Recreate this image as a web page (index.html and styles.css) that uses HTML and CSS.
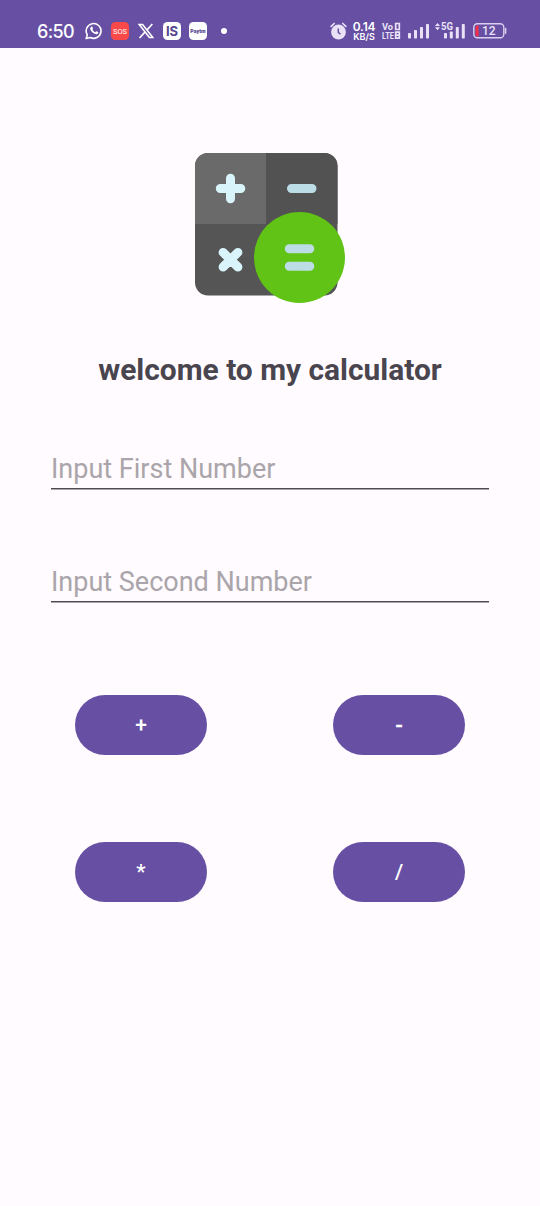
FILE: index.html
```html
<!DOCTYPE html>
<html lang="en">
<head>
<meta charset="utf-8">
<meta name="viewport" content="width=device-width">
<title>Calculator</title>
<link rel="stylesheet" href="styles.css">
</head>
<body>
<header class="status">
  <div class="status-left">
    <span class="clock">6:50</span>
    <svg class="whatsapp" width="18" height="18" viewBox="0 0 18 18" fill="none">
      <path d="M1.200 16.600 2.300 12.800A7.400 7.400 0 1 1 5.200 15.500Z" stroke="#fff" stroke-width="1.600" stroke-linejoin="round"/>
      <path d="M6.200 4.700c.5-.4 1-.2 1.200.2l.6 1.400c.2.500-.6 1-.6 1.300.5 1.100 1.500 2.100 2.800 2.600.4.100.9-1.100 1.300-.9l1.600.8c.6.400-.1 1.600-.7 2-2 1.100-6.100-1.900-7-4.500-.4-1.100 0-2.200.8-2.900Z" fill="#fff"/>
    </svg>
    <span class="app sos">SOS</span>
    <svg class="x-logo" width="16" height="16" viewBox="0 0 16 16" fill="none" stroke="#fff">
      <path d="M1.200 1.500h3.400L14.800 14.500h-3.400Z" stroke-width="1.600"/>
      <path d="M14.300 1 9 7M7 9 1.500 15" stroke-width="1.700"/>
    </svg>
    <span class="app is">IS</span>
    <span class="app paytm">Paytm</span>
    <span class="dot"></span>
  </div>
  <div class="status-right">
    <svg class="alarm" width="17" height="18" viewBox="0 0 17 18" fill="none">
      <circle cx="8.500" cy="10" r="7.400" fill="#e9e1f6"/>
      <path d="M1.200 4.300 4.200 1.500M15.800 4.300 12.800 1.500" stroke="#e9e1f6" stroke-width="1.700" stroke-linecap="round"/>
      <path d="M8.300 6.500v4l2.200 1.700" stroke="#6750a4" stroke-width="1.500"/>
    </svg>
    <span class="speed"><b>0.14</b><small>KB/S</small></span>
    <svg class="volte" width="19" height="18" viewBox="0 0 19 18">
      <text x="0" y="8" textLength="11" lengthAdjust="spacingAndGlyphs">Vo</text>
      <text x="0" y="16.500" textLength="12" lengthAdjust="spacingAndGlyphs">LTE</text>
      <path d="M13.700 1.500h3.600v6h-3.600ZM13.700 10.200h3.600v6h-3.600ZM13.700 13.200h3.600" fill="none" stroke="#e9e1f6" stroke-width="1.700"/>
    </svg>
    <svg class="signal" width="22" height="16" viewBox="0 0 22 16" fill="#e9e1f6">
      <rect x="0" y="10" width="3" height="5.500" rx=".8"/><rect x="6" y="7" width="3" height="8.500" rx=".8"/><rect x="12" y="4" width="3" height="11.500" rx=".8"/><rect x="18" y="1" width="3" height="14.500" rx=".8"/>
    </svg>
    <svg class="signal5g" width="31" height="18" viewBox="0 0 31 18" fill="#e9e1f6">
      <path d="m0 4 2.500-3 2.500 3ZM0 5.300h5l-2.500 3Z"/>
      <text x="6" y="8" textLength="12" lengthAdjust="spacingAndGlyphs">5G</text>
      <rect x="9" y="11" width="3" height="5.500" rx=".8"/><rect x="14.800" y="9.500" width="3" height="7" rx=".8"/><rect x="20.800" y="5" width="3" height="11.500" rx=".8"/><rect x="26.800" y="2" width="3" height="14.500" rx=".8"/>
    </svg>
    <svg class="battery" width="34" height="16" viewBox="0 0 34 16" fill="none">
      <rect x=".8" y=".8" width="30" height="14" rx="3.600" stroke="#d9cfee" stroke-width="1.400"/>
      <path d="M6 2.500Q5 5 5.500 7.500T5.500 13.500H4.600Q2.500 13.500 2.500 11.400V4.600Q2.500 2.500 4.600 2.500Z" fill="#f3304a"/>
      <path d="M32.600 5.500v4.800" stroke="#d9cfee" stroke-width="1.500" stroke-linecap="round"/>
      <text x="9" y="12.300" textLength="13.500">12</text>
    </svg>
  </div>
</header>
<main class="screen">
  <svg class="logo" width="151" height="151" viewBox="0 0 151 151">
    <rect width="142.500" height="142.500" rx="13" fill="#555"/>
    <path d="M13 0H71V71H0V13A13 13 0 0 1 13 0Z" fill="#6a6a6a"/>
    <path d="M71 0h58.500a13 13 0 0 1 13 13v58H71Z" fill="#525252"/>
    <circle cx="104.500" cy="104.500" r="45.500" fill="#60c315"/>
    <g fill="none" stroke-width="9" stroke-linecap="round">
      <path d="M35.500 25.300v20.500M25.300 35.500h20.500M28.100 99.400l14.800 14.600M42.900 99.400 28.100 114" stroke="#d9f4fa"/>
      <path d="M96.500 35.500h20.500M94.300 95.700h20.500M94.300 113.300h20.500" stroke="#bcdde5"/>
    </g>
  </svg>
  <h1 class="title">welcome to my calculator</h1>
  <input class="field" type="text" placeholder="Input First Number">
  <input class="field field-second" type="text" placeholder="Input Second Number">
  <div class="keys">
    <button class="key">+</button>
    <button class="key minus">-</button>
    <button class="key">*</button>
    <button class="key">/</button>
  </div>
</main>
</body>
</html>
```
FILE: styles.css
```css
* { box-sizing: border-box; }
body {
  margin: 0;
  min-height: 1206px;
  background: #fffbfe;
  font-family: Roboto, sans-serif;
}
.status {
  height: 48px;
  padding: 14px 33px 0 37px;
  background: #6750a4;
  color: #fff;
  display: flex;
  justify-content: space-between;
}
.status-left, .status-right { display: flex; align-items: center; height: 34px; }
.clock { width: 37px; padding-top: 1px; font: 500 18px/34px Inter, sans-serif; letter-spacing: -.6px; white-space: nowrap; }
.whatsapp { margin-left: 11px; }
.app {
  display: flex;
  align-items: center;
  justify-content: center;
  width: 18px;
  height: 18px;
  border-radius: 4.5px;
  background: #fff;
  color: #55468f;
  overflow: hidden;
}
.sos { margin-left: 8px; background: #fb4849; color: #fff; font-size: 7.5px; }
.x-logo { margin-left: 9px; }
.is { margin-left: 9px; font: 700 13px/18px Inter, sans-serif; }
.paytm { margin-left: 8px; font-size: 5.3px; font-weight: 900; }
.dot { width: 6px; height: 6px; margin-left: 14px; border-radius: 50%; background: #fff; }
.speed { display: flex; flex-direction: column; align-items: center; width: 24px; margin-left: 5px; padding-top: 1px; font-family: Inter, sans-serif; }
.speed b { font-size: 12px; line-height: 10px; font-weight: 600; letter-spacing: -.2px; }
.speed small { font-size: 9px; line-height: 9px; font-weight: 600; }
.volte { margin-left: 6px; fill: #e9e1f6; font: 700 9.5px Roboto, sans-serif; }
.signal { margin-left: 7px; }
.signal5g { margin: -1px 0 0 5px; font: 700 10px Roboto, sans-serif; }
.battery { margin-left: 7px; }
.battery text { fill: #e9e1f6; font: 500 12px Roboto, sans-serif; }
.screen { display: flex; flex-direction: column; align-items: center; padding: 105px 51px 0; }
.logo { display: block; }
.title { margin: 48px 0 0; font-size: 29.9px; line-height: 36px; font-weight: 700; color: #49454f; white-space: nowrap; }
.field {
  width: 438px;
  height: 41px;
  margin-top: 60px;
  padding: 1px 0 0;
  border: 0;
  border-bottom: 1px solid #4f4b54;
  border-radius: 0;
  box-shadow: 0 1px 0 #a9a5ab;
  outline: 0;
  background: none;
  font: 400 27px Roboto, sans-serif;
  color: #1c1b1f;
}
.field::placeholder { color: #aaa5aa; opacity: 1; }
.field-second { margin-top: 72px; }
.keys { display: grid; grid-template-columns: 132px 132px; gap: 87px 126px; margin-top: 93px; }
.key {
  height: 60px;
  padding: 0;
  border: 0;
  border-radius: 30px;
  background: #6750a4;
  color: #fff;
  font: 500 21px Roboto, sans-serif;
}
.minus { -webkit-text-stroke: .5px #fff; }
```
